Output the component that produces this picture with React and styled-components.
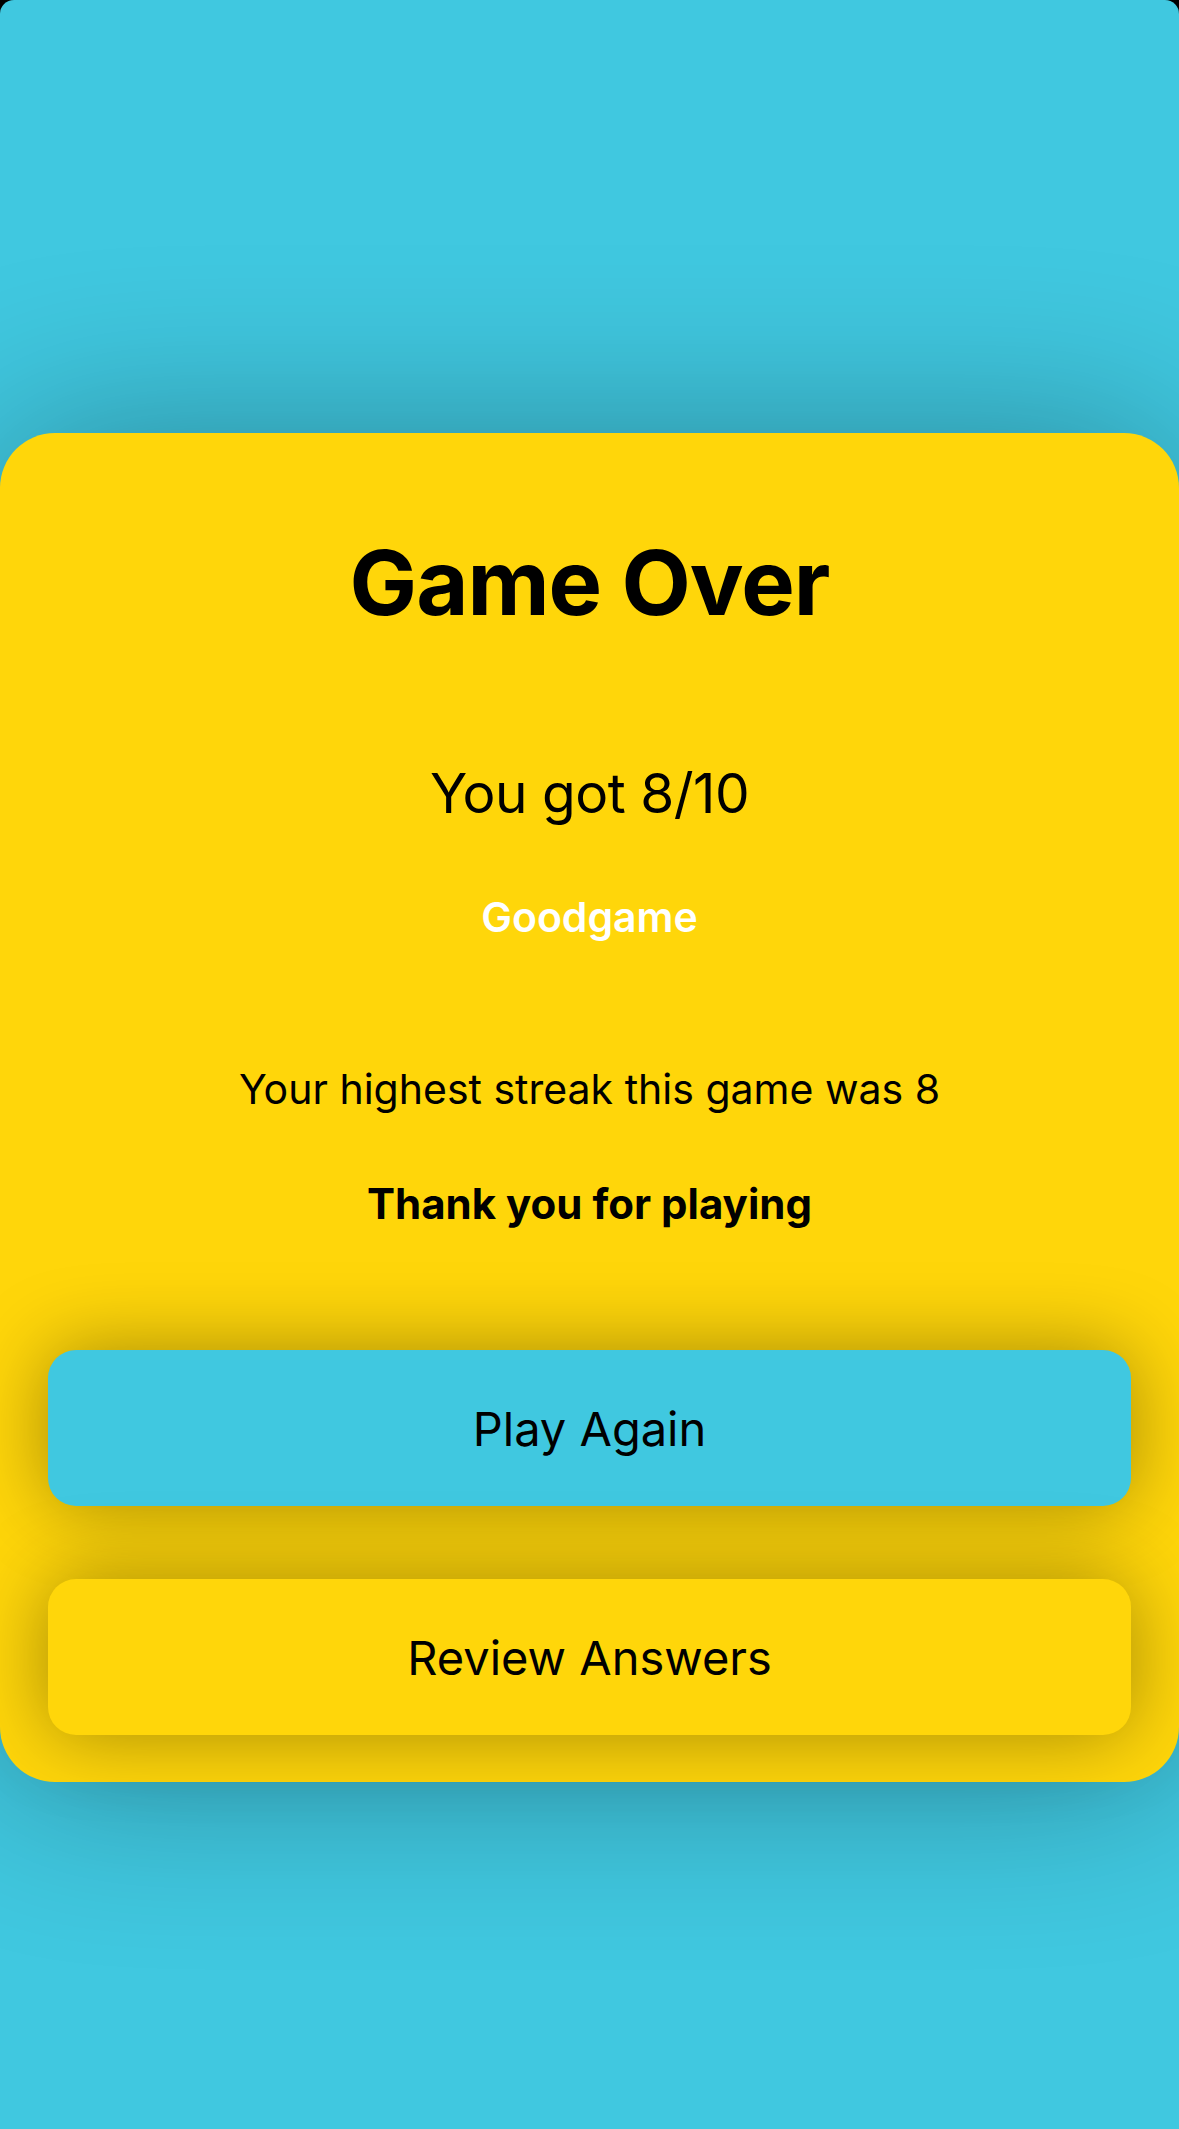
import React from 'react'
import styled, { createGlobalStyle } from 'styled-components'

const Global = createGlobalStyle`
    html, body {
        margin: 0;
        padding: 0;
        background: #000;
    }
    body {
        font-family: Inter, "Noto Sans", "Liberation Sans", sans-serif;
        -webkit-font-smoothing: antialiased;
    }
`

const Screen = styled.div`
    width: 1179px;
    min-height: 2129px;
    box-sizing: border-box;
    background-color: #40c8e0;
    border-radius: 14px 14px 0 0;
    padding-top: 433px;
    overflow: hidden;
`

const Card = styled.div`
    background-color: #ffd60a;
    border-radius: 55px;
    box-shadow: 0 0 180px rgba(0, 0, 0, 0.32);
    padding: 105px 48px 47px;
    display: flex;
    flex-direction: column;
    align-items: center;
    text-align: center;
`

const Title = styled.h1`
    margin: 0;
    font-size: 90px;
    line-height: 1;
    font-weight: 700;
    letter-spacing: -1px;
    color: #000;
`

const Line = styled.p`
    margin: ${p => p.$gap}px 0 0;
    font-size: ${p => p.$size}px;
    line-height: 1;
    font-weight: ${p => p.$weight || 400};
    color: ${p => p.$light ? '#fff' : '#000'};
    letter-spacing: ${p => p.$track || 0}px;
`

const Actions = styled.div`
    align-self: stretch;
    display: flex;
    flex-direction: column;
    gap: 73px;
    margin-top: 125px;
`

const Button = styled.button`
    height: 156px;
    border: none;
    border-radius: 28px;
    background-color: ${p => p.$primary ? '#40c8e0' : '#ffd60a'};
    box-shadow: 0 0 80px rgba(0, 0, 0, 0.36);
    font-family: inherit;
    font-size: 47px;
    font-weight: 400;
    color: #000;
    cursor: pointer;
`

const App = () => {
    const score = 8
    const total = 10
    const streak = 8
  return (
    <Screen>
        <Global/>
        <Card>
            <Title>Game Over</Title>
            <Line $gap={138} $size={55} $track={-0.5}>You got {score}/{total}</Line>
            <Line $gap={76} $size={41} $weight={600} $light>Goodgame</Line>
            <Line $gap={131} $size={41}>Your highest streak this game was {streak}</Line>
            <Line $gap={73} $size={42} $weight={700}>Thank you for playing</Line>
            <Actions>
                <Button $primary>Play Again</Button>
                <Button>Review Answers</Button>
            </Actions>
        </Card>
    </Screen>
  )
}

export default App
